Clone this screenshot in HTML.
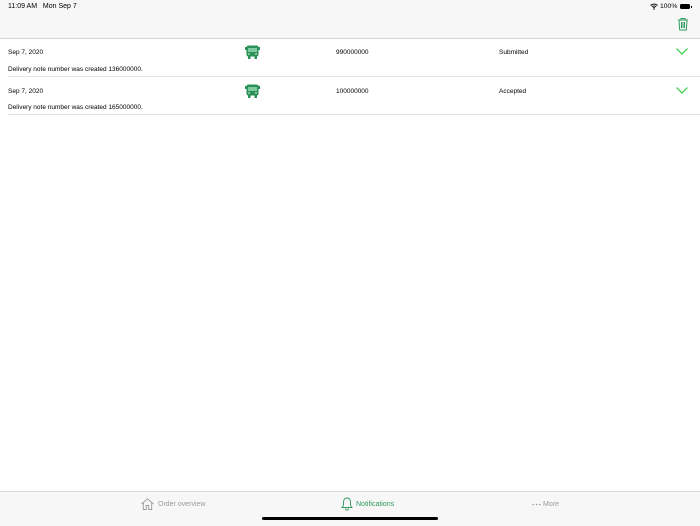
<!DOCTYPE html>
<html><head><style>
body{margin:0;width:700px;height:525px;position:relative;background:#fff;font-family:"Liberation Sans",sans-serif;overflow:hidden;color:#000}
.hdr{position:absolute;left:0;top:0;width:700px;height:38px;background:#f7f7f7;border-bottom:1px solid #d8d8d8}
.t{position:absolute;font-size:6.5px;white-space:nowrap}
.sep{position:absolute;left:8px;right:0;height:1px;background:#e2e2e2}
.tab{position:absolute;left:0;top:491px;width:700px;height:34px;background:#f7f7f7;border-top:1px solid #dcdcdc}
</style></head><body>
<div class="hdr"></div>
<div class="t" style="left:8px;top:3px;font-size:7px">11:09 AM&nbsp;&nbsp;&nbsp;Mon Sep 7</div>
<svg style="position:absolute;left:650px;top:3px" width="8" height="7" viewBox="0 0 8 7"><path d="M0.5 2.5A5 5 0 0 1 7.5 2.5M1.8 3.8A3.2 3.2 0 0 1 6.2 3.8M3 5.1A1.5 1.5 0 0 1 5 5.1" stroke="#000" fill="none" stroke-width="0.9"/><circle cx="4" cy="6.2" r="0.6"/></svg>
<div class="t" style="left:660px;top:3px;font-size:6.8px">100%</div>
<div style="position:absolute;left:680px;top:4px;width:10px;height:5px;background:#000;border-radius:1.5px"></div>
<div style="position:absolute;left:691px;top:5.5px;width:1px;height:2px;background:#000"></div>
<svg style="position:absolute;left:677px;top:17px" width="12" height="14" viewBox="0 0 12 14"><g stroke="#2e9a5e" fill="none" stroke-width="1"><path d="M1 3H11M4 3V1.5H8V3M2 3L2.7 13H9.3L10 3M4.5 5V11M6 5V11M7.5 5V11"/></g></svg>

<div class="t" style="left:8px;top:49px">Sep 7, 2020</div>
<svg style="position:absolute;left:245px;top:45px" width="15" height="14" viewBox="0 0 15 14"><rect x="1.5" y="0.5" width="12" height="11" rx="2" fill="#2a9158"/><rect x="3" y="3" width="9" height="4" fill="#7fcaa0"/><rect x="0" y="2" width="1.5" height="3" fill="#2a9158"/><rect x="13.5" y="2" width="1.5" height="3" fill="#2a9158"/><rect x="3" y="11" width="2.5" height="3" fill="#2a9158"/><rect x="9.5" y="11" width="2.5" height="3" fill="#2a9158"/><circle cx="4" cy="9" r="0.9" fill="#bfe5cf"/><circle cx="11" cy="9" r="0.9" fill="#bfe5cf"/></svg>
<div class="t" style="left:336px;top:49px">990000000</div>
<div class="t" style="left:499px;top:49px">Submitted</div>
<svg style="position:absolute;left:676px;top:48px" width="12" height="7" viewBox="0 0 12 7"><path d="M0.5 0.5L6 6L11.5 0.5" stroke="#2ecc40" fill="none" stroke-width="1.2"/></svg>
<div class="t" style="left:8px;top:66px">Delivery note number was created 136000000.</div>
<div class="sep" style="top:76px"></div>

<div class="t" style="left:8px;top:88px">Sep 7, 2020</div>
<svg style="position:absolute;left:245px;top:84px" width="15" height="14" viewBox="0 0 15 14"><rect x="1.5" y="0.5" width="12" height="11" rx="2" fill="#2a9158"/><rect x="3" y="3" width="9" height="4" fill="#7fcaa0"/><rect x="0" y="2" width="1.5" height="3" fill="#2a9158"/><rect x="13.5" y="2" width="1.5" height="3" fill="#2a9158"/><rect x="3" y="11" width="2.5" height="3" fill="#2a9158"/><rect x="9.5" y="11" width="2.5" height="3" fill="#2a9158"/><circle cx="4" cy="9" r="0.9" fill="#bfe5cf"/><circle cx="11" cy="9" r="0.9" fill="#bfe5cf"/></svg>
<div class="t" style="left:336px;top:88px">100000000</div>
<div class="t" style="left:499px;top:88px">Accepted</div>
<svg style="position:absolute;left:676px;top:87px" width="12" height="7" viewBox="0 0 12 7"><path d="M0.5 0.5L6 6L11.5 0.5" stroke="#2ecc40" fill="none" stroke-width="1.2"/></svg>
<div class="t" style="left:8px;top:104px">Delivery note number was created 165000000.</div>
<div class="sep" style="top:114px"></div>

<div class="tab"></div>
<svg style="position:absolute;left:141px;top:498px" width="13" height="12" viewBox="0 0 13 12"><path d="M0.5 6L6.5 0.8L12.5 6M2.3 4.5V11.5H5.3V7.5H7.7V11.5H10.7V4.5" stroke="#999" fill="none" stroke-width="0.9"/></svg>
<div class="t" style="left:158px;top:501px;font-size:7px;color:#9a9a9a">Order overview</div>
<svg style="position:absolute;left:341px;top:497px" width="12" height="14" viewBox="0 0 12 14"><path d="M6 1C3.5 1 2.5 3 2.5 5V8.5L1 10.5H11L9.5 8.5V5C9.5 3 8.5 1 6 1ZM4.5 11.5A1.5 1.5 0 0 0 7.5 11.5" stroke="#2e9a5e" fill="none" stroke-width="0.9"/></svg>
<div class="t" style="left:356px;top:501px;font-size:7px;color:#2e9a5e">Notifications</div>
<svg style="position:absolute;left:532px;top:503px" width="9" height="3" viewBox="0 0 9 3"><circle cx="1.2" cy="1.5" r="0.8" fill="#999"/><circle cx="4.5" cy="1.5" r="0.8" fill="#999"/><circle cx="7.8" cy="1.5" r="0.8" fill="#999"/></svg>
<div class="t" style="left:543px;top:501px;font-size:7px;color:#9a9a9a">More</div>
<div style="position:absolute;left:262px;top:517px;width:176px;height:3px;border-radius:2px;background:#000"></div>
</body></html>
